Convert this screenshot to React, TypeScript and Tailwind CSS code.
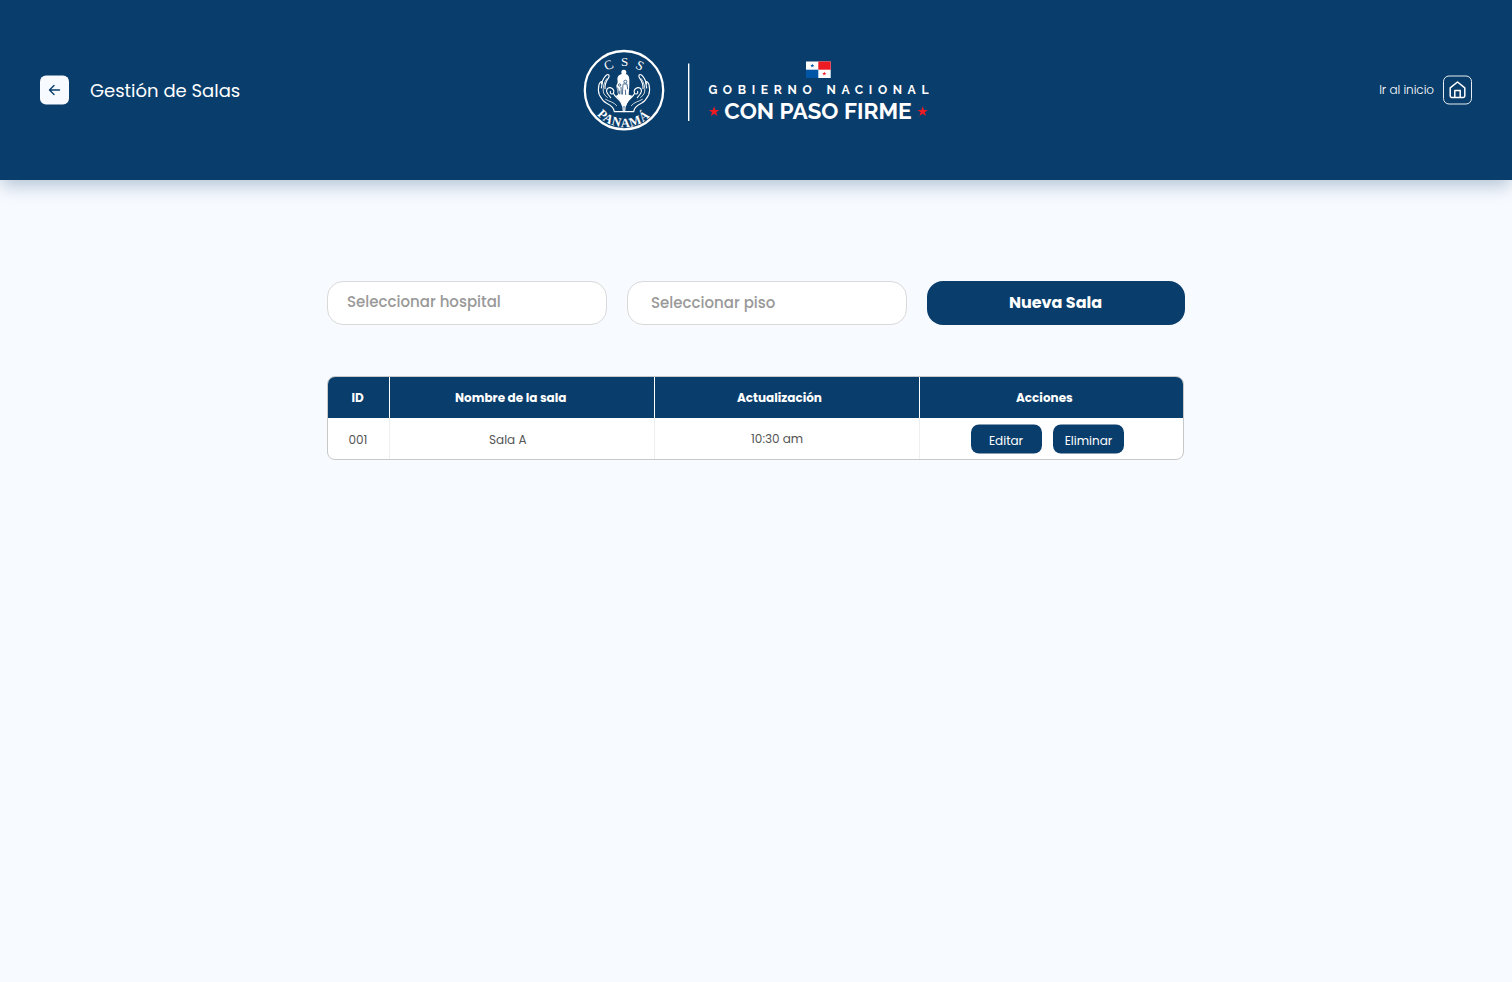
import React from "react";

const STAR = "M0 -5 L1.25 -1.6 L4.9 -1.55 L2 0.65 L3.05 4.1 L0 2.05 L-3.05 4.1 L-2 0.65 L-4.9 -1.55 L-1.25 -1.6 Z";

function Hand() {
  return (
    <g transform="scale(.33333) translate(42 60)" fill="none" stroke="white" strokeWidth="3.4" strokeLinecap="round" strokeLinejoin="round">
      <path d="M100 149 L73 149 C72 136 62 130 50 124 C36 116 33 108 28 98 C24 88 25 76 27 68 C30 59 36 56 37 62 L34 78" />
      <path d="M34 66 C38 54 44 42 51 38 C57 36 59 41 56 47 C48 58 44 68 45 80" />
      <path d="M50 50 C42 62 38 76 40 90 C42 98 47 102 52 106" strokeWidth="2.4" />
      <path d="M52 94 C46 84 52 76 61 77 C70 79 74 87 70 94 C65 98 59 95 61 88" />
      <path d="M52 94 C55 99 59 102 62 107 M70 94 C75 106 86 110 93 121 C98 129 101 138 100 149" />
      <path d="M47 112 C58 119 72 120 80 131" strokeWidth="2.4" />
    </g>
  );
}

function Emblem() {
  return (
    <svg className="block h-24 w-24 shrink-0" viewBox="0 0 96 96">
      <defs>
        <path id="lower-arc" d="M17.2 67.4 A36.2 36.2 0 0 0 79.8 66.6" />
      </defs>
      <circle cx="48" cy="48.2" r="39.2" fill="none" stroke="white" strokeWidth="2.3" />
      <g fill="white" fontFamily="Liberation Serif, serif" fontSize="13" textAnchor="middle">
        <text transform="translate(34.3 27) rotate(-25)">C</text>
        <text x="48.7" y="24">S</text>
        <text transform="translate(62 27.5) rotate(27)">S</text>
      </g>
      <text fill="white" fontFamily="Liberation Serif, serif" fontSize="12.8" fontWeight="700">
        <textPath href="#lower-arc" startOffset="6.5" textLength="59">PANAMÁ</textPath>
      </text>
      <Hand />
      <g transform="translate(96 0) scale(-1 1)">
        <Hand />
      </g>
      <g transform="scale(.33333)">
        <path
          fill="white"
          d="M137 96 C134 88 137 83 143 83 C150 83 153 88 150 96 C157 98 160 105 160 113 L160 130 L158 158 L169 161 C162 173 153 180 149 193 L140 193 C137 180 130 172 119 162 L126 158 L122 137 L121 130 C125 126 126 120 124 112 C124 103 129 98 137 96 Z"
        />
        <g stroke="#093d6b" strokeWidth="2.2" fill="none">
          <circle cx="148" cy="119" r="4.5" />
          <circle cx="131" cy="129" r="3.5" />
          <path d="M141 126 L153 126 L155 142 M141 127 L139 158 M148 143 L149 159 M125 137 L128 155 M135 135 L136 157 M131 146 L131 157" />
        </g>
      </g>
    </svg>
  );
}

function Slogan() {
  return (
    <svg className="block h-20 w-[260px] shrink-0" viewBox="0 0 260 80">
      <rect x="8" y="13.5" width="1.4" height="57.5" fill="white" />
      <rect x="126" y="11.5" width="24.7" height="16.5" fill="white" />
      <rect x="138.3" y="11.5" width="12.4" height="8.2" fill="#ed1c24" />
      <rect x="126" y="19.7" width="12.3" height="8.3" fill="#0055a5" />
      <path d={STAR} fill="#0055a5" transform="translate(132.3 15.7) scale(.42)" />
      <path d={STAR} fill="#ed1c24" transform="translate(144.3 23.7) scale(.42)" />
      <g fill="white" fontFamily="Raleway, Lato, sans-serif" fontWeight="700">
        <text x="28.4" y="44.4" fontSize="12.2" textLength="103.2" lengthAdjust="spacing">GOBIERNO</text>
        <text x="146.5" y="44.4" fontSize="12.2" textLength="102" lengthAdjust="spacing">NACIONAL</text>
      </g>
      <text x="44.3" y="69" fill="white" fontFamily="Raleway, Lato, sans-serif" fontSize="22.2" fontWeight="700" textLength="187.4" lengthAdjust="spacingAndGlyphs">
        CON PASO FIRME
      </text>
      <path d={STAR} fill="#ed1c24" transform="translate(34.1 61.6) scale(1.06)" />
      <path d={STAR} fill="#ed1c24" transform="translate(242.7 61.6) scale(1.06)" />
    </svg>
  );
}

function BackIcon() {
  return (
    <svg className="h-[15px] w-[15px]" viewBox="0 0 15 15" fill="none" stroke="#093d6b" strokeWidth="1.4" strokeLinecap="round" strokeLinejoin="round">
      <path d="M12.5 7.5 H2.7 M7 3 L2.5 7.5 L7 12" />
    </svg>
  );
}

function HomeIcon() {
  return (
    <svg className="h-[19px] w-[19px]" viewBox="0 0 19 19" fill="none" stroke="white" strokeWidth="1.5" strokeLinejoin="round" strokeLinecap="round">
      <path d="M9.5 1.5 L2.2 7.4 V15.6 Q2.2 17 3.6 17 H15.4 Q16.8 17 16.8 15.6 V7.4 Z M6.8 17 V10 H12.2 V17" />
    </svg>
  );
}

export default function App() {
  return (
    <div className="min-h-[982px] bg-[#f7faff] font-['Poppins','Inter',sans-serif] whitespace-nowrap">
      <header className="grid h-[180px] grid-cols-[1fr_368px_1fr] items-center bg-[#093d6b] px-10 text-white shadow-[0_8px_16px_-2px_rgba(9,61,107,0.28)]">
        <div className="flex items-center">
          <button className="flex h-[29px] w-[29px] -translate-y-[0.5px] items-center justify-center rounded-md bg-[#f7faff]">
            <BackIcon />
          </button>
          <h1 className="ml-[21px] pt-px text-lg leading-7 font-normal">Gestión de Salas</h1>
        </div>
        <div className="flex items-center gap-2 pl-1">
          <Emblem />
          <Slogan />
        </div>
        <div className="flex items-center justify-end gap-[9px]">
          <span className="text-xs font-light tracking-[-0.05px]">Ir al inicio</span>
          <button className="flex h-[29px] w-[29px] -translate-y-[0.5px] items-center justify-center rounded-md border border-white/90">
            <HomeIcon />
          </button>
        </div>
      </header>

      <main className="mx-auto w-[858px] pt-[101px]">
        <div className="flex gap-5 text-[15px]">
          <div className="h-11 w-[280px] rounded-2xl border border-[#d9d9d9] bg-white pl-[19px] leading-10 font-medium text-[#999]">Seleccionar hospital</div>
          <div className="h-11 w-[280px] rounded-2xl border border-[#d9d9d9] bg-white pl-[23px] leading-[42px] font-medium text-[#999]">Seleccionar piso</div>
          <button className="h-11 w-[258px] rounded-2xl bg-[#093d6b] pr-px text-base font-bold text-white">Nueva Sala</button>
        </div>

        <div className="mt-[51px] w-[857px] overflow-hidden rounded-lg border border-[#c8c8c8] bg-white">
          <div className="grid h-[41px] grid-cols-[62px_265px_265px_263px] bg-[#093d6b] text-xs leading-[41px] font-bold text-white">
            <div className="border-r border-white pl-[23.5px]">ID</div>
            <div className="border-r border-white pl-[65px]">Nombre de la sala</div>
            <div className="border-r border-white pl-[82px]">Actualización</div>
            <div className="pl-[96px]">Acciones</div>
          </div>
          <div className="grid h-[41px] grid-cols-[62px_265px_265px_263px] text-xs text-[#555]">
            <div className="border-r border-[#eee] pl-[20.5px] leading-[43px]">001</div>
            <div className="border-r border-[#eee] pl-[99px] leading-[43px]">Sala A</div>
            <div className="border-r border-[#eee] pl-[96px] leading-[42px]">10:30 am</div>
            <div className="flex items-center gap-[11px] pl-[51px] leading-[29px] text-white">
              <button className="h-[29px] w-[71px] -translate-y-[0.5px] rounded-lg bg-[#093d6b] pt-px pr-px">Editar</button>
              <button className="h-[29px] w-[71px] -translate-y-[0.5px] rounded-lg bg-[#093d6b] pt-px">Eliminar</button>
            </div>
          </div>
        </div>
      </main>
    </div>
  );
}
